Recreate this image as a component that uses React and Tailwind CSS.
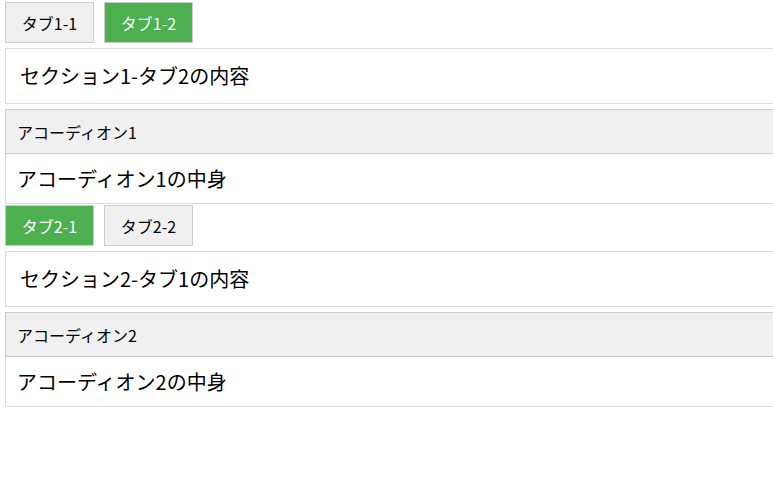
import React from "react";

const font = { fontFamily: '"Noto Sans CJK JP", "Noto Sans", sans-serif' };

function Section({ n, active, contentText, accTitle, accBody, first }) {
  const tabs = [`タブ${n}-1`, `タブ${n}-2`];
  return (
    <div className={first ? "pt-[2px]" : "pt-px"}>
      <div className="flex gap-[10px]">
        {tabs.map((t, i) => (
          <div
            key={t}
            className={
              "w-[89px] h-[41px] flex items-center justify-center border text-[16px] " +
              (i === active
                ? "bg-[#4caf50] border-[#cccccc] text-white"
                : "bg-[#f0f0f0] border-[#cccccc] text-black")
            }
          >
            {t}
          </div>
        ))}
      </div>
      <div className="mt-[5px] h-[56px] flex items-center pl-[14px] border border-r-0 border-[#dddddd] text-[20px] text-black">
        {contentText}
      </div>
      <div className="mt-[5px]">
        <div className="h-[45px] flex items-center pl-[11px] bg-[#f0f0f0] border border-r-0 border-[#cccccc] text-[16px] text-black">
          {accTitle}
        </div>
        <div className="h-[50px] flex items-center pl-[11px] border border-t-0 border-r-0 border-[#dddddd] text-[20px] text-black">
          {accBody}
        </div>
      </div>
    </div>
  );
}

export default function App() {
  return (
    <div className="pl-[5px] bg-white min-h-[502px]" style={font}>
      <Section
        first
        n={1}
        active={1}
        contentText="セクション1-タブ2の内容"
        accTitle="アコーディオン1"
        accBody="アコーディオン1の中身"
      />
      <Section
        n={2}
        active={0}
        contentText="セクション2-タブ1の内容"
        accTitle="アコーディオン2"
        accBody="アコーディオン2の中身"
      />
    </div>
  );
}
